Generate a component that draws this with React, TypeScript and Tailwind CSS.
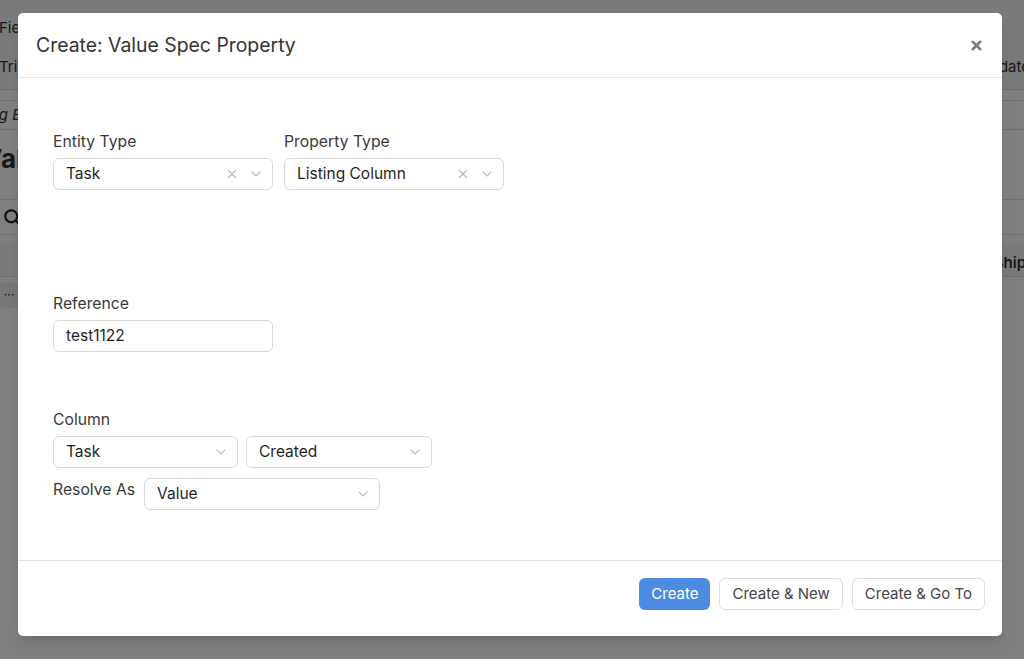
import { X, ChevronDown, Search } from "lucide-react";

const font = { fontFamily: "Inter, 'Noto Sans', sans-serif" };

function SelectBox({
  value,
  width,
  clearable = false,
}: {
  value: string;
  width: string;
  clearable?: boolean;
}) {
  return (
    <div
      className={`${width} h-[32px] rounded-[6px] border border-[#d9d9d9] bg-white flex items-center pl-[12px] pr-[8px]`}
    >
      <span className="flex-1 text-[15.5px] text-[#1f1f1f] truncate">{value}</span>
      {clearable && <X className="w-[14px] h-[14px] text-[#bcbcbc] mr-[9px]" strokeWidth={2.4} />}
      <ChevronDown className="w-[16px] h-[16px] text-[#bcbcbc]" strokeWidth={1.6} />
    </div>
  );
}

function Label({ children }: { children: string }) {
  return <div className="text-[15.75px] leading-[20px] text-[#3a3a3a] pt-[1px] mb-[6px]">{children}</div>;
}

function BackgroundPage() {
  return (
    <div className="w-full h-[659px] bg-white overflow-hidden text-[#333]" style={font}>
      <div className="h-[90px] bg-[#f3f4f6] border-b border-[#dcdcdc] flex flex-col">
        <div className="h-[56px] flex items-center -ml-[1px] text-[15px]">Fields</div>
        <div className="flex-1 flex items-start justify-between text-[15px]">
          <span className="-ml-[1px]">Triggers</span>
          <span className="-mr-[6px]">Update</span>
        </div>
      </div>
      <div className="mt-[10px] h-[30px] border-y border-[#dcdcdc] flex items-center text-[15px] italic">
        <span className="-ml-[10px]">ng Editor</span>
      </div>
      <div className="h-[56px] flex items-center text-[26px] font-bold">
        <span className="-ml-[17px]">Value Spec Properties</span>
      </div>
      <div className="mt-[13px] h-[36px] border-y border-[#dcdcdc] flex items-center pl-[3px]">
        <Search className="w-[18px] h-[18px] text-[#222]" strokeWidth={3} />
      </div>
      <div className="mt-[8px] h-[34px] bg-[#f3f4f6] border-b border-[#dcdcdc] flex items-center justify-end text-[15px] font-semibold">
        <span className="-mr-[2px] pt-[8px]">Ownership</span>
      </div>
      <div className="h-[36px] flex items-center">
        <div className="-ml-[6px] w-[30px] h-[26px] rounded-full bg-[#eeeeee] flex items-center justify-center text-[13px]">
          ···
        </div>
      </div>
    </div>
  );
}

export default function App() {
  return (
    <div className="relative w-full h-[659px] overflow-hidden">
      <BackgroundPage />
      <div className="absolute inset-0 bg-black/50 flex justify-start items-start pt-[13px] pl-[18px]" style={font}>
        <div className="w-[984px] bg-white rounded-[5px] shadow-lg flex flex-col">
          <div className="h-[65px] border-b border-[#e6e6e6] flex items-center justify-between pl-[18px] pr-[18px]">
            <h1 className="text-[19.4px] text-[#333] font-normal pt-[1px]">Create: Value Spec Property</h1>
            <X className="w-[15px] h-[15px] text-[#7a7a7a]" strokeWidth={4} />
          </div>

          <div className="px-[35px] pt-[53px] pb-[50px]">
            <div className="flex gap-[11px]">
              <div>
                <Label>Entity Type</Label>
                <SelectBox value="Task" width="w-[220px]" clearable />
              </div>
              <div>
                <Label>Property Type</Label>
                <SelectBox value="Listing Column" width="w-[220px]" clearable />
              </div>
            </div>

            <div className="mt-[103px]">
              <Label>Reference</Label>
              <div className="w-[220px] h-[32px] rounded-[6px] border border-[#d9d9d9] bg-white flex items-center px-[12px] text-[15.5px] text-[#1f1f1f]">
                test1122
              </div>
            </div>

            <div className="mt-[57px]">
              <Label>Column</Label>
              <div className="flex gap-[8px]">
                <SelectBox value="Task" width="w-[185px]" />
                <SelectBox value="Created" width="w-[186px]" />
              </div>
              <div className="flex items-start gap-[9px] mt-[10px]">
                <span className="text-[15.75px] leading-[20px] text-[#3a3a3a] pt-[2px]">Resolve As</span>
                <SelectBox value="Value" width="w-[236px]" />
              </div>
            </div>
          </div>

          <div className="border-t border-[#e6e6e6] flex justify-end gap-[9px] pr-[17px] pt-[17px] pb-[26px]">
            <button className="h-[32px] px-[12px] rounded-[6px] bg-[#4d8be2] text-white text-[15px]">Create</button>
            <button className="h-[32px] px-[12px] rounded-[6px] border border-[#d9dde3] bg-white text-[#444] text-[15px]">
              Create &amp; New
            </button>
            <button className="h-[32px] px-[12px] rounded-[6px] border border-[#d9dde3] bg-white text-[#444] text-[15px]">
              Create &amp; Go To
            </button>
          </div>
        </div>
      </div>
    </div>
  );
}
